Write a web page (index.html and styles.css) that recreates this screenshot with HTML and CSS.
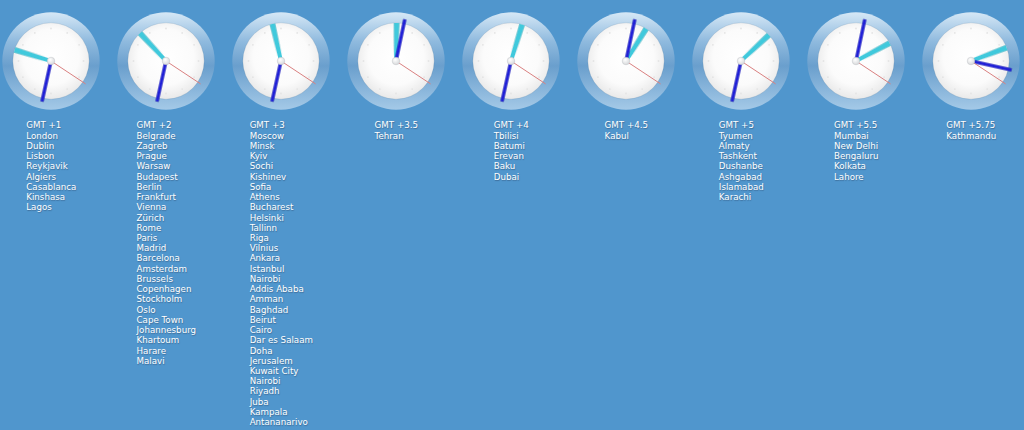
FILE: index.html
```html
<!DOCTYPE html>
<html lang="en">
<head>
    <meta charset="UTF-8">
    <title>World Clocks</title>
    <link rel="stylesheet" href="styles.css">
</head>
<body>
    <svg class="defs" width="0" height="0">
        <defs>
            <linearGradient id="rimFill" x1="0" y1="0" x2="0" y2="1">
                <stop offset="0" stop-color="#d6e8f6"/>
                <stop offset="0.3" stop-color="#8fbade"/>
                <stop offset="0.55" stop-color="#6a9fcd"/>
                <stop offset="1" stop-color="#a4c9e7"/>
            </linearGradient>
            <radialGradient id="faceFill" cx="0.5" cy="0.45" r="0.56">
                <stop offset="0" stop-color="#ffffff"/>
                <stop offset="0.65" stop-color="#fbfbfb"/>
                <stop offset="1" stop-color="#e8e8e8"/>
            </radialGradient>
            <radialGradient id="pinFill" cx="0.4" cy="0.35" r="0.7">
                <stop offset="0" stop-color="#ffffff"/>
                <stop offset="1" stop-color="#d4d6d8"/>
            </radialGradient>
            <polygon id="hourHand" points="-1.9,0 1.9,0 2.7,-38 -2.7,-38"/>
            <symbol id="face" viewBox="-50 -50 100 100">
                <circle r="48.7" fill="url(#rimFill)"/>
                <circle class="dial" r="38.2" fill="url(#faceFill)"/>
                <g class="ticks">
                    <circle cx="0" cy="-32.5"/><circle cx="16.2" cy="-28.1"/><circle cx="28.1" cy="-16.2"/>
                    <circle cx="32.5" cy="0"/><circle cx="28.1" cy="16.2"/><circle cx="16.2" cy="28.1"/>
                    <circle cx="0" cy="32.5"/><circle cx="-16.2" cy="28.1"/><circle cx="-28.1" cy="16.2"/>
                    <circle cx="-32.5" cy="0"/><circle cx="-28.1" cy="-16.2"/><circle cx="-16.2" cy="-28.1"/>
                </g>
            </symbol>
        </defs>
    </svg>

    <div class="zones">
        <div class="zone">
            <svg class="clock" viewBox="-50 -50 100 100">
                <use href="#face" x="-50" y="-50" width="100" height="100"/>
                <use class="hour" href="#hourHand" transform="rotate(287)"/>
                <line class="minute" y2="-41.5" transform="rotate(192.5)"/>
                <line class="second" y2="-41.5" transform="rotate(123.5)"/>
                <circle class="pin" r="3.8"/>
            </svg>
            <ul class="cities">
                <li>GMT +1</li><li>London</li><li>Dublin</li><li>Lisbon</li><li>Reykjavik</li><li>Algiers</li><li>Casablanca</li><li>Kinshasa</li><li>Lagos</li>
            </ul>
        </div>
        <div class="zone">
            <svg class="clock" viewBox="-50 -50 100 100">
                <use href="#face" x="-50" y="-50" width="100" height="100"/>
                <use class="hour" href="#hourHand" transform="rotate(317)"/>
                <line class="minute" y2="-41.5" transform="rotate(192.5)"/>
                <line class="second" y2="-41.5" transform="rotate(123.5)"/>
                <circle class="pin" r="3.8"/>
            </svg>
            <ul class="cities">
                <li>GMT +2</li><li>Belgrade</li><li>Zagreb</li><li>Prague</li><li>Warsaw</li><li>Budapest</li><li>Berlin</li><li>Frankfurt</li><li>Vienna</li><li>Zürich</li><li>Rome</li><li>Paris</li><li>Madrid</li><li>Barcelona</li><li>Amsterdam</li><li>Brussels</li><li>Copenhagen</li><li>Stockholm</li><li>Oslo</li><li>Cape Town</li><li>Johannesburg</li><li>Khartoum</li><li>Harare</li><li>Malavi</li>
            </ul>
        </div>
        <div class="zone">
            <svg class="clock" viewBox="-50 -50 100 100">
                <use href="#face" x="-50" y="-50" width="100" height="100"/>
                <use class="hour" href="#hourHand" transform="rotate(347)"/>
                <line class="minute" y2="-41.5" transform="rotate(192.5)"/>
                <line class="second" y2="-41.5" transform="rotate(123.5)"/>
                <circle class="pin" r="3.8"/>
            </svg>
            <ul class="cities">
                <li>GMT +3</li><li>Moscow</li><li>Minsk</li><li>Kyiv</li><li>Sochi</li><li>Kishinev</li><li>Sofia</li><li>Athens</li><li>Bucharest</li><li>Helsinki</li><li>Tallinn</li><li>Riga</li><li>Vilnius</li><li>Ankara</li><li>Istanbul</li><li>Nairobi</li><li>Addis Ababa</li><li>Amman</li><li>Baghdad</li><li>Beirut</li><li>Cairo</li><li>Dar es Salaam</li><li>Doha</li><li>Jerusalem</li><li>Kuwait City</li><li>Nairobi</li><li>Riyadh</li><li>Juba</li><li>Kampala</li><li>Antananarivo</li>
            </ul>
        </div>
        <div class="zone">
            <svg class="clock" viewBox="-50 -50 100 100">
                <use href="#face" x="-50" y="-50" width="100" height="100"/>
                <use class="hour" href="#hourHand" transform="rotate(1)"/>
                <line class="minute" y2="-42.5" transform="rotate(12)"/>
                <line class="second" y2="-41.5" transform="rotate(123.5)"/>
                <circle class="pin" r="3.8"/>
            </svg>
            <ul class="cities">
                <li>GMT +3.5</li><li>Tehran</li>
            </ul>
        </div>
        <div class="zone">
            <svg class="clock" viewBox="-50 -50 100 100">
                <use href="#face" x="-50" y="-50" width="100" height="100"/>
                <use class="hour" href="#hourHand" transform="rotate(17)"/>
                <line class="minute" y2="-41.5" transform="rotate(192.5)"/>
                <line class="second" y2="-41.5" transform="rotate(123.5)"/>
                <circle class="pin" r="3.8"/>
            </svg>
            <ul class="cities">
                <li>GMT +4</li><li>Tbilisi</li><li>Batumi</li><li>Erevan</li><li>Baku</li><li>Dubai</li>
            </ul>
        </div>
        <div class="zone">
            <svg class="clock" viewBox="-50 -50 100 100">
                <use href="#face" x="-50" y="-50" width="100" height="100"/>
                <use class="hour" href="#hourHand" transform="rotate(32)"/>
                <line class="minute" y2="-42.5" transform="rotate(12)"/>
                <line class="second" y2="-41.5" transform="rotate(123.5)"/>
                <circle class="pin" r="3.8"/>
            </svg>
            <ul class="cities">
                <li>GMT +4.5</li><li>Kabul</li>
            </ul>
        </div>
        <div class="zone">
            <svg class="clock" viewBox="-50 -50 100 100">
                <use href="#face" x="-50" y="-50" width="100" height="100"/>
                <use class="hour" href="#hourHand" transform="rotate(47)"/>
                <line class="minute" y2="-41.5" transform="rotate(192.5)"/>
                <line class="second" y2="-41.5" transform="rotate(123.5)"/>
                <circle class="pin" r="3.8"/>
            </svg>
            <ul class="cities">
                <li>GMT +5</li><li>Tyumen</li><li>Almaty</li><li>Tashkent</li><li>Dushanbe</li><li>Ashgabad</li><li>Islamabad</li><li>Karachi</li>
            </ul>
        </div>
        <div class="zone">
            <svg class="clock" viewBox="-50 -50 100 100">
                <use href="#face" x="-50" y="-50" width="100" height="100"/>
                <use class="hour" href="#hourHand" transform="rotate(62)"/>
                <line class="minute" y2="-42.5" transform="rotate(12)"/>
                <line class="second" y2="-41.5" transform="rotate(123.5)"/>
                <circle class="pin" r="3.8"/>
            </svg>
            <ul class="cities">
                <li>GMT +5.5</li><li>Mumbai</li><li>New Delhi</li><li>Bengaluru</li><li>Kolkata</li><li>Lahore</li>
            </ul>
        </div>
        <div class="zone">
            <svg class="clock" viewBox="-50 -50 100 100">
                <use href="#face" x="-50" y="-50" width="100" height="100"/>
                <use class="hour" href="#hourHand" transform="rotate(69.5)"/>
                <line class="minute" y2="-41.5" transform="rotate(102.5)"/>
                <line class="second" y2="-41.5" transform="rotate(123.5)"/>
                <circle class="pin" r="3.8"/>
            </svg>
            <ul class="cities">
                <li>GMT +5.75</li><li>Kathmandu</li>
            </ul>
        </div>
    </div>
</body>
</html>
```

FILE: styles.css
```css
html, body {
    height: 430px;
    overflow: hidden;
}
body {
    margin: 0;
    background-color: #5096cd;
    font-family: "DejaVu Sans", sans-serif;
    font-size: 8.7px;
    color: white;
}
.defs {
    position: absolute;
}
.zones {
    display: flex;
    margin-left: -6.2px;
    padding-top: 11.4px;
}
.zone {
    flex: 0 0 115px;
    display: flex;
    flex-direction: column;
    align-items: center;
}
.clock {
    display: block;
    width: 100px;
    height: 100px;
}
.cities {
    list-style: none;
    margin: 9px 0 0;
    padding: 0;
    line-height: 10.24px;
    text-shadow: 0.5px 0.5px 1px rgba(40, 60, 90, 0.45);
}
.dial {
    stroke: rgba(60, 100, 140, 0.2);
    stroke-width: 0.8;
}
.ticks circle {
    r: 0.9px;
    fill: #e4e4e4;
}
.hour {
    fill: #40c9dc;
    filter: drop-shadow(0 0 0.6px rgba(0, 0, 0, 0.3));
}
.minute {
    stroke: #2020d8;
    stroke-width: 3.2;
    filter: drop-shadow(0 0 0.6px rgba(0, 0, 0, 0.35));
}
.second {
    stroke: #d98080;
    stroke-width: 0.9;
}
.pin {
    fill: url(#pinFill);
    stroke: #b8bcc0;
    stroke-width: 0.4;
}
```
